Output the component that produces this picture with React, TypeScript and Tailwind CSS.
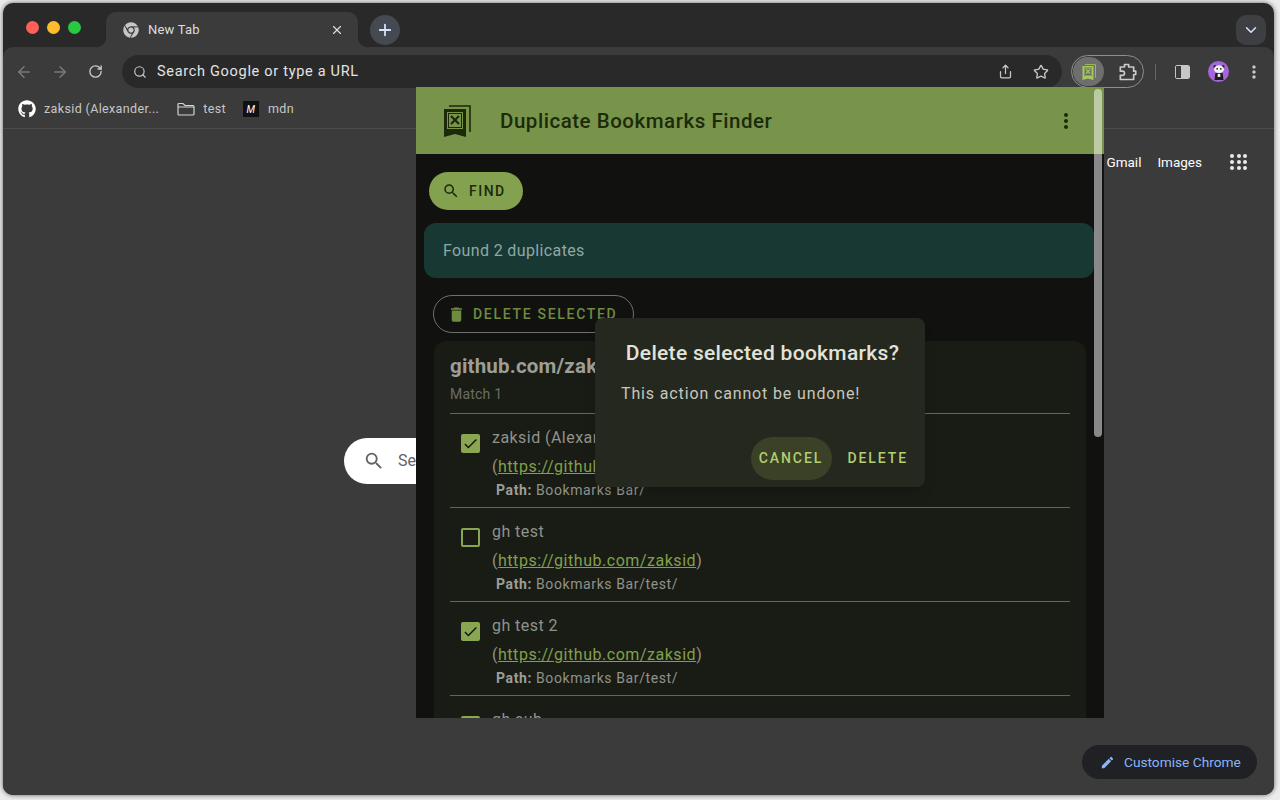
import { ArrowLeft, ArrowRight, ChevronDown, Plus, RotateCw, Search, Share, Star, X } from 'lucide-react';
import { FaChrome, FaGithub } from 'react-icons/fa';
import { MdCheck, MdDelete, MdEdit, MdMoreVert, MdSearch } from 'react-icons/md';

const LogoIcon = ({ className }: { className: string }) => (
  <svg viewBox="0 0 28 32" className={className}>
    <path d="M6 1h21v26" fill="none" stroke="currentColor" strokeWidth="1.6" />
    <path fillRule="evenodd" fill="currentColor" d="M1 4h22v28l-11-3-11 3zM4 7v17h16V7z" />
    <path d="M8 11l8 8M16 11l-8 8" stroke="currentColor" strokeWidth="2.2" />
    <rect x="5.5" y="8.5" width="13" height="14" fill="none" stroke="currentColor" strokeWidth="1" />
  </svg>
);

const PuzzleIcon = () => (
  <svg viewBox="0 0 24 24" className="h-[20px] w-[20px] text-[#c9cbc9]" fill="none" stroke="currentColor" strokeWidth="2" strokeLinejoin="round">
    <path d="M4 6h5V3h5v3h6v5h2.5v4H20v6H4v-5h2.5a2.5 2.5 0 0 0 0-5H4z" />
  </svg>
);

const PandaAvatar = () => (
  <div className="flex h-[21px] w-[21px] items-center justify-center rounded-full bg-[#a765dc]">
    <svg viewBox="0 0 20 20" className="h-[18px] w-[18px]">
      <circle cx="5.5" cy="4" r="1.7" fill="#222" />
      <circle cx="14.5" cy="4" r="1.7" fill="#222" />
      <ellipse cx="10" cy="7" rx="5.5" ry="4.4" fill="#f2f2f2" />
      <circle cx="8" cy="6.5" r="1" fill="#222" />
      <circle cx="12" cy="6.5" r="1" fill="#222" />
      <path d="M6 11h8l1 8H5z" fill="#1d1d1d" />
      <rect x="8.5" y="12" width="3" height="3.5" fill="#eee" />
    </svg>
  </div>
);

const AppsGrid = () => (
  <div className="grid w-[18px] grid-cols-3 gap-[2px]">
    {[0, 1, 2, 3, 4, 5, 6, 7, 8].map((n) => (
      <span key={n} className="h-1 w-1 rounded-full bg-[#e8eaed]" />
    ))}
  </div>
);

const bookmarks = [
  { name: 'zaksid (Alexander Zakhar...', path: 'Bookmarks Bar/', checked: true },
  { name: 'gh test', path: 'Bookmarks Bar/test/', checked: false },
  { name: 'gh test 2', path: 'Bookmarks Bar/test/', checked: true },
  { name: 'gh sub', path: 'Bookmarks Bar/test/sub/', checked: true },
];

const Popup = () => (
  <div className="absolute left-[413px] top-[84px] flex h-[631px] w-[688px] flex-col overflow-hidden bg-[#111210] font-['Roboto',sans-serif]">
    <header className="flex h-[67px] shrink-0 items-center bg-[#78934a] pl-[27px] text-[#1c2a0a]">
      <LogoIcon className="h-8 w-7" />
      <h1 className="ml-[29px] pt-[1px] text-[20.5px] font-medium tracking-[0.53px]">Duplicate Bookmarks Finder</h1>
      <MdMoreVert className="ml-auto mr-[26px] h-6 w-6" />
    </header>

    <div className="pr-[10px]">
      <button className="ml-[13px] mt-[18px] flex h-[38px] w-[94px] items-center rounded-full bg-[#84a14f] pl-[13px] text-[14px] font-medium tracking-[1.5px] text-[#1c2a0a]">
        <MdSearch className="mr-[9px] h-[18px] w-[18px]" />
        FIND
      </button>
      <div className="ml-2 mt-[13px] flex h-[55px] items-center rounded-xl bg-[#173833] pl-[19px] text-[16px] tracking-[0.37px] text-[#8fa8a4]">
        Found 2 duplicates
      </div>
      <button className="ml-[17px] mt-[17px] flex h-[38px] w-[201px] items-center rounded-full border border-[#6f7168] pl-[13px] text-[14px] font-medium tracking-[1.7px] text-[#6f8b3f]">
        <MdDelete className="mr-[7px] h-[19px] w-[19px]" />
        DELETE SELECTED
      </button>

      <section className="ml-[18px] mr-2 mt-2 rounded-t-xl bg-[#191c15] px-4 pt-[13px]">
        <h2 className="text-[20.5px] font-bold leading-[24px] tracking-[0.2px] text-[#9c9e97]">github.com/zaksid</h2>
        <p className="mt-[6px] pb-[9px] text-[14px] leading-[20px] tracking-[0.2px] text-[#6b6d66]">Match 1</p>
        {bookmarks.map((item) => (
          <div key={item.name} className="flex h-[94px] border-t border-[#63655e] pl-[11px] pt-[12px]">
            {item.checked ? (
              <span className="mt-[8px] flex h-[19px] w-[19px] shrink-0 items-center justify-center rounded-[2px] bg-[#8aa653] text-[#12150c]">
                <MdCheck className="h-[17px] w-[17px]" />
              </span>
            ) : (
              <span className="mt-[8px] h-[19px] w-[19px] shrink-0 rounded-[2px] border-2 border-[#8aa653]" />
            )}
            <div className="ml-3">
              <p className="h-[24px] text-[16px] leading-[24px] tracking-[0.45px] text-[#90928b]">{item.name}</p>
              <p className="mt-[5px] h-[24px] text-[16px] leading-[24px] tracking-[0.53px] text-[#90928b]">
                (<span className="text-[#82a04b] underline">https://github.com/zaksid</span>)
              </p>
              <p className="ml-1 mt-[1px] text-[14px] leading-[20px] tracking-[0.6px] text-[#90928b]">
                <b className="font-bold text-[#9c9e97]">Path:</b> {item.path}
              </p>
            </div>
          </div>
        ))}
      </section>
    </div>

    {/* scrollbar thumb */}
    <div className="absolute right-[2px] top-[2px] h-[348px] w-2 rounded-full bg-white/50" />

    {/* dialog */}
    <div className="absolute left-[179px] top-[231px] flex h-[169px] w-[330px] flex-col rounded-lg bg-[#25281f] shadow-lg">
      <h3 className="mt-[22px] pl-[5px] text-center text-[21px] font-medium leading-[26px] tracking-[0.3px] text-[#e1e3d9]">
        Delete selected bookmarks?
      </h3>
      <p className="ml-[26px] mt-[16px] text-[16px] leading-[24px] tracking-[0.86px] text-[#c5c7bc]">
        This action cannot be undone!
      </p>
      <div className="mt-[31px] flex items-center justify-end pr-[17px] text-[14px] font-medium tracking-[1.9px] text-[#b0cf6e]">
        <span className="flex h-[43px] w-[81px] items-center justify-center rounded-full bg-[#3a4126]">CANCEL</span>
        <span className="ml-4">DELETE</span>
      </div>
    </div>
  </div>
);

export default function App() {
  return (
    <div className="h-[800px] w-[1280px] overflow-hidden bg-[#ececec] pb-[5px] pl-[3px] pr-[6px] pt-[3px] font-['Roboto',sans-serif]">
      <div className="relative flex h-full flex-col overflow-hidden rounded-[10px] bg-[#292929] shadow-[0_0_5px_rgba(0,0,0,0.6)]">
        {/* tab strip */}
        <div className="flex h-[44px] shrink-0 items-start">
          <div className="ml-[23px] mt-[17.5px] flex gap-2">
            <span className="h-[13px] w-[13px] rounded-full bg-[#fe5f57]" />
            <span className="h-[13px] w-[13px] rounded-full bg-[#febc2e]" />
            <span className="h-[13px] w-[13px] rounded-full bg-[#28c840]" />
          </div>
          <div className="relative ml-[25px] mt-[9px] flex h-[35px] w-[252px] items-center rounded-t-[10px] bg-[#3b3b3b] pl-[17px] pr-[14px] text-[#dcdedf]">
            <span className="absolute -left-[10px] bottom-0 h-[10px] w-[10px] bg-[radial-gradient(circle_at_0_0,transparent_10px,#3b3b3b_10.5px)]" />
            <span className="absolute -right-[10px] bottom-0 h-[10px] w-[10px] bg-[radial-gradient(circle_at_100%_0,transparent_10px,#3b3b3b_10.5px)]" />
            <FaChrome className="h-4 w-4 text-[#c4c6c8]" />
            <span className="ml-[9px] text-[13px] tracking-[0.2px]">New Tab</span>
            <X className="ml-auto h-[14px] w-[14px]" />
          </div>
          <div className="ml-[12px] mt-[12px] flex h-[30px] w-[30px] items-center justify-center rounded-full bg-[#454a52] text-[#d5e3fb]">
            <Plus className="h-[18px] w-[18px]" strokeWidth={2.4} />
          </div>
          <div className="ml-auto mr-[8px] mt-[12px] flex h-[30px] w-[30px] items-center justify-center rounded-[10px] bg-[#3d3f43] text-[#d5e3fb]">
            <ChevronDown className="h-[18px] w-[18px]" />
          </div>
        </div>

        {/* toolbar */}
        <div className="flex h-[41px] shrink-0 items-center rounded-t-[10px] bg-[#3b3b3b] pl-[12px] pt-[8px] text-[#c7c7c7]">
          <ArrowLeft className="h-[18px] w-[18px] text-[#7a7a7a]" />
          <ArrowRight className="ml-[18px] h-[18px] w-[18px] text-[#7a7a7a]" />
          <RotateCw className="ml-[19px] h-[15px] w-[15px]" strokeWidth={2.2} />
          <div className="ml-[19px] flex h-[33px] w-[940px] items-center rounded-full bg-[#292929] pl-[11px] pr-[11px]">
            <Search className="h-[14px] w-[14px]" />
            <span className="ml-[10px] text-[14.5px] tracking-[0.7px] text-[#e3e3e3]">Search Google or type a URL</span>
            <Share className="ml-auto mr-[2px] h-[15px] w-[15px]" />
            <Star className="ml-[18px] mr-[2px] h-[16px] w-[16px]" />
          </div>
          <div className="ml-[9px] flex h-[33px] w-[73px] items-center rounded-full border border-[#8e8e8e] pl-[1px]">
            <span className="flex h-[29px] w-[31px] items-center justify-center rounded-full bg-[#6e6e6e]">
              <LogoIcon className="h-[16px] w-[14px] text-[#a5c95a]" />
            </span>
            <span className="ml-[13px]">
              <PuzzleIcon />
            </span>
          </div>
          <span className="ml-[11px] h-[16px] w-px bg-[#666]" />
          <span className="ml-[19px] flex h-[14px] w-[15px] overflow-hidden rounded-[2px] border-[1.5px] border-[#c7c7c7]">
            <span className="w-[5px] bg-[#3b3b3b]" />
            <span className="flex-1 bg-[#c7c7c7]" />
          </span>
          <span className="ml-[18px]">
            <PandaAvatar />
          </span>
          <MdMoreVert className="ml-[15px] h-[20px] w-[20px]" />
        </div>

        {/* bookmarks bar */}
        <div className="flex h-[41px] shrink-0 items-center border-b border-[#4c4c4c] bg-[#3b3b3b] pl-[15px] pt-[2px] text-[12.5px] tracking-[0.36px] text-[#c7c7c7]">
          <FaGithub className="h-[18px] w-[18px] text-white" />
          <span className="ml-[8px]">zaksid (Alexander...</span>
          <svg viewBox="0 0 18 14" className="ml-[18px] h-[14px] w-[18px]" fill="none" stroke="#d6d6d6" strokeWidth="1.2">
            <path d="M1 2.5a1 1 0 0 1 1-1h4l2 2h8a1 1 0 0 1 1 1v7.5a1 1 0 0 1-1 1H2a1 1 0 0 1-1-1z" />
            <path d="M1 5h16" />
          </svg>
          <span className="ml-[8px]">test</span>
          <span className="ml-[17px] flex h-[16px] w-[16px] items-center justify-center bg-[#111] text-[10px] italic text-white">M</span>
          <span className="ml-[9px]">mdn</span>
        </div>

        {/* new tab page */}
        <main className="flex min-h-0 flex-1 flex-col bg-[#3b3b3b] pr-[10px]">
          <div className="flex items-center justify-end pr-[16px] pt-[23px] text-[13.5px] text-white">
            <span>Gmail</span>
            <span className="ml-[16px]">Images</span>
            <span className="ml-[28px]">
              <AppsGrid />
            </span>
          </div>
          <div className="ml-[341px] mt-[266px] flex h-[46px] w-[592px] items-center rounded-full bg-white pl-[19px] text-[16px] text-[#5f6368]">
            <MdSearch className="h-[22px] w-[22px]" />
            <span className="ml-[13px]">Search Google or type a URL</span>
          </div>
          <div className="ml-auto mr-[7px] mt-auto mb-[16px] flex h-[34px] w-[175px] items-center rounded-full bg-[#202124] pl-[18px] text-[13.7px] text-[#8ab4f8]">
            <MdEdit className="h-[15px] w-[15px]" />
            <span className="ml-[9px]">Customise Chrome</span>
          </div>
        </main>

        <Popup />
      </div>
    </div>
  );
}
